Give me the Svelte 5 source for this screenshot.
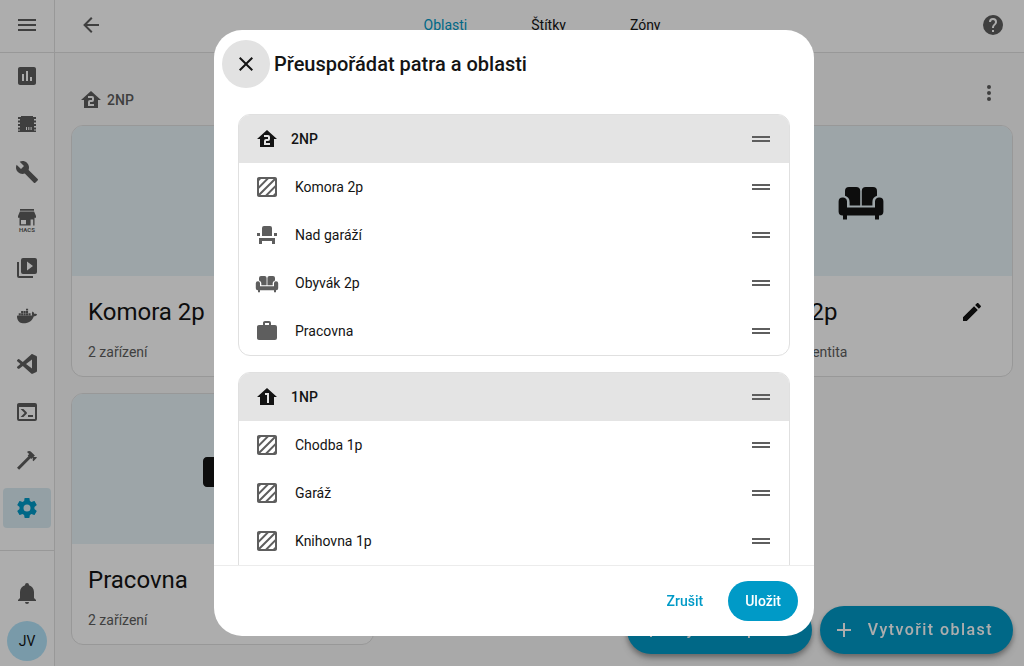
<script lang="ts">
	interface Room {
		name: string;
		icon: string;
	}

	interface Floor {
		name: string;
		icon: string;
		rooms: Room[];
	}

	const ICONS: Record<string, string> = {
		menu: 'M3,6H21V8H3V6M3,11H21V13H3V11M3,16H21V18H3V16Z',
		chart: 'M9 17H7V10H9V17M13 17H11V7H13V17M17 17H15V13H17V17M19 3H5C3.9 3 3 3.9 3 5V19C3 20.1 3.9 21 5 21H19C20.1 21 21 20.1 21 19V5C21 3.9 20.1 3 19 3Z',
		chip: 'M6 4H18V5H21V7H19V8.5H21V10.5H19V12H21V14H19V15.5H21V17.5H19V18.5H21V20H6V20H3V18.5H5V17.5H3V15.5H5V14H3V12H5V10.5H3V8.5H5V7H3V5H6V4M11 15V18H12V15H11M13.3 15V18H14.3V15H13.3M15.6 15V18H16.6V15H15.6Z',
		wrench: 'M22.7,19L13.6,9.9C14.5,7.6 14,4.9 12.1,3C10.1,1 7.1,0.6 4.7,1.7L9,6L6,9L1.6,4.7C0.4,7.1 0.9,10.1 2.9,12.1C4.8,14 7.5,14.5 9.8,13.6L18.9,22.7C19.3,23.1 19.9,23.1 20.3,22.7L22.6,20.4C23.1,20 23.1,19.3 22.7,19Z',
		hacs: 'M5 1H19V2.8H5V1M4.9 3.5H19.1L21 8V9.8H3V8L4.9 3.5M4.5 9.8H19.5V17.5H18.2V11.6H15.6V17.5H4.5V9.8M6 12V16.2H11V12H6Z',
		media: 'M4,6H2V20A2,2 0 0,0 4,22H18V20H4V6M20,2H8A2,2 0 0,0 6,4V16A2,2 0 0,0 8,18H20A2,2 0 0,0 22,16V4A2,2 0 0,0 20,2M12,14.5V5.5L18,10L12,14.5Z',
		docker: 'M21.81 10.25C21.75 10.21 21.25 9.82 20.17 9.82C19.89 9.82 19.61 9.85 19.33 9.9C19.12 8.5 17.95 7.79 17.9 7.76L17.61 7.59L17.43 7.86C17.19 8.22 17 8.63 16.92 9.05C16.72 9.85 16.84 10.61 17.25 11.26C16.76 11.54 15.96 11.61 15.79 11.61H2.62C2.28 11.61 2 11.89 2 12.24C2 13.39 2.18 14.54 2.58 15.62C3.03 16.81 3.71 17.69 4.58 18.23C5.56 18.83 7.17 19.17 9 19.17C9.79 19.17 10.61 19.1 11.42 18.95C12.54 18.75 13.62 18.36 14.61 17.79C15.43 17.32 16.16 16.72 16.78 16C17.82 14.83 18.43 13.5 18.89 12.35H19.07C20.23 12.35 20.94 11.89 21.33 11.5C21.59 11.26 21.78 10.97 21.92 10.63L22 10.39L21.81 10.25M3.7 9.3H5.8V11.2H3.7V9.3M6.1 9.3H8.2V11.2H6.1V9.3M8.6 9.3H10.7V11.2H8.6V9.3M11 9.3H13.1V11.2H11V9.3M13.5 9.3H15.6V11.2H13.5V9.3M6.1 7H8.2V8.9H6.1V7M8.6 7H10.7V8.9H8.6V7M11 7H13.1V8.9H11V7M11 4.7H13.1V6.6H11V4.7Z',
		vscode: 'M17 16.6V7.4L11 12L17 16.6M2.2 9.2C1.9 8.9 1.9 8.4 2.2 8.1L3.2 7.2C3.5 7 3.9 7 4.2 7.2L7.8 10L16.2 2.4C16.6 2.1 17.1 2 17.6 2.2L21.4 4.1C21.8 4.3 22 4.7 22 5.1V18.9C22 19.3 21.8 19.7 21.4 19.9L17.6 21.8C17.1 22 16.6 21.9 16.2 21.6L7.8 14L4.2 16.8C3.9 17 3.5 17 3.2 16.8L2.2 15.9C1.9 15.6 1.9 15.1 2.2 14.8L5.4 12L2.2 9.2Z',
		console: 'M20,19V7H4V19H20M20,3A2,2 0 0,1 22,5V19A2,2 0 0,1 20,21H4A2,2 0 0,1 2,19V5C2,3.89 2.9,3 4,3H20M13,17V15H18V17H13M9.58,13L5.57,9H8.4L11.7,12.3C12.09,12.69 12.09,13.33 11.7,13.72L8.42,17H5.59L9.58,13Z',
		hammer: 'M2,19.63L13.43,8.2L12.72,7.5L14.14,6.07L12,3.89C13.2,2.7 15.09,2.7 16.27,3.89L19.87,7.5L18.45,8.91H21.29L22,9.62L18.45,13.21L17.74,12.5V9.62L16.27,11.04L15.56,10.33L4.13,21.76L2,19.63Z',
		cog: 'M12,15.5A3.5,3.5 0 0,1 8.5,12A3.5,3.5 0 0,1 12,8.5A3.5,3.5 0 0,1 15.5,12A3.5,3.5 0 0,1 12,15.5M19.43,12.97C19.47,12.65 19.5,12.33 19.5,12C19.5,11.67 19.47,11.34 19.43,11L21.54,9.37C21.73,9.22 21.78,8.95 21.66,8.73L19.66,5.27C19.54,5.05 19.27,4.96 19.05,5.05L16.56,6.05C16.04,5.66 15.5,5.32 14.87,5.07L14.5,2.42C14.46,2.18 14.25,2 14,2H10C9.75,2 9.54,2.18 9.5,2.42L9.13,5.07C8.5,5.32 7.96,5.66 7.44,6.05L4.95,5.05C4.73,4.96 4.46,5.05 4.34,5.27L2.34,8.73C2.21,8.95 2.27,9.22 2.46,9.37L4.57,11C4.53,11.34 4.5,11.67 4.5,12C4.5,12.33 4.53,12.65 4.57,12.97L2.46,14.63C2.27,14.78 2.21,15.05 2.34,15.27L4.34,18.73C4.46,18.95 4.73,19.03 4.95,18.95L7.44,17.94C7.96,18.34 8.5,18.68 9.13,18.93L9.5,21.58C9.54,21.82 9.75,22 10,22H14C14.25,22 14.46,21.82 14.5,21.58L14.87,18.93C15.5,18.67 16.04,18.34 16.56,17.94L19.05,18.95C19.27,19.03 19.54,18.95 19.66,18.73L21.66,15.27C21.78,15.05 21.73,14.78 21.54,14.63L19.43,12.97Z',
		bell: 'M21,19V20H3V19L5,17V11C5,7.9 7.03,5.17 10,4.29C10,4.19 10,4.1 10,4A2,2 0 0,1 12,2A2,2 0 0,1 14,4C14,4.1 14,4.19 14,4.29C16.97,5.17 19,7.9 19,11V17L21,19M14,21A2,2 0 0,1 12,23A2,2 0 0,1 10,21Z',
		back: 'M20,11V13H8L13.5,18.5L12.08,19.92L4.16,12L12.08,4.08L13.5,5.5L8,11H20Z',
		help: 'M15.07,11.25L14.17,12.17C13.45,12.89 13,13.5 13,15H11V14.5C11,13.39 11.45,12.39 12.17,11.67L13.41,10.41C13.78,10.05 14,9.55 14,9C14,7.89 13.1,7 12,7A2,2 0 0,0 10,9H8A4,4 0 0,1 12,5A4,4 0 0,1 16,9C16,9.88 15.64,10.67 15.07,11.25M13,19H11V17H13M12,2A10,10 0 0,0 2,12A10,10 0 0,0 12,22A10,10 0 0,0 22,12C22,6.47 17.5,2 12,2Z',
		dots: 'M12,16A2,2 0 0,1 14,18A2,2 0 0,1 12,20A2,2 0 0,1 10,18A2,2 0 0,1 12,16M12,10A2,2 0 0,1 14,12A2,2 0 0,1 12,14A2,2 0 0,1 10,12A2,2 0 0,1 12,10M12,4A2,2 0 0,1 14,6A2,2 0 0,1 12,8A2,2 0 0,1 10,6A2,2 0 0,1 12,4Z',
		pencil: 'M20.71,7.04C21.1,6.65 21.1,6 20.71,5.63L18.37,3.29C18,2.9 17.35,2.9 16.96,3.29L15.12,5.12L18.87,8.87M3,17.25V21H6.75L17.81,9.93L14.06,6.18L3,17.25Z',
		plus: 'M19,13H13V19H11V13H5V11H11V5H13V11H19V13Z',
		close: 'M19,6.41L17.59,5L12,10.59L6.41,5L5,6.41L10.59,12L5,17.59L6.41,19L12,13.41L17.59,19L19,17.59L13.41,12L19,6.41Z',
		drag: 'M21 11H3V9H21V11M21 15H3V13H21V15Z',
		floor1: 'M12,3L2,12H5V20H19V12H22L12,3M10,8H14V18H12V10H10V8Z',
		floor2: 'M12,3L2,12H5V20H19V12H22L12,3M9,8H13A2,2 0 0,1 15,10V12A2,2 0 0,1 13,14H11V16H15V18H9V14A2,2 0 0,1 11,12H13V10H9V8Z',
		texture: 'M20 2H4C2.9 2 2 2.9 2 4V20C2 21.11 2.9 22 4 22H20C21.11 22 22 21.11 22 20V4C22 2.9 21.11 2 20 2M4 6L6 4H10.9L4 10.9V6M4 13.7L13.7 4H18.6L4 18.6V13.7M20 18L18 20H13.1L20 13.1V18M20 10.3L10.3 20H5.4L20 5.4V10.3Z',
		seat: 'M4,18V21H7V18H17V21H20V15H4V18M19,10H22V13H19V10M2,10H5V13H2V10M17,13H7V5A2,2 0 0,1 9,3H15A2,2 0 0,1 17,5V13Z',
		sofa: 'M6 5H9.6A2 2 0 0 1 11.6 7V14.2H6.3V12.6C6.3 10.9 5.5 9.9 4 9.4V7A2 2 0 0 1 6 5M14.4 5H18A2 2 0 0 1 20 7V9.4C18.5 9.9 17.7 10.9 17.7 12.6V14.2H12.4V7A2 2 0 0 1 14.4 5M2.8 10.3A2 2 0 0 1 5 12.3V15.2H19V12.3A2 2 0 0 1 21.2 10.3A2 2 0 0 1 23.2 12.3V17.2A2 2 0 0 1 21.2 19.2H21V21.2H19V19.2H5V21.2H3V19.2H2.8A2 2 0 0 1 .8 17.2V12.3A2 2 0 0 1 2.8 10.3Z',
		briefcase: 'M10,2H14A2,2 0 0,1 16,4V6H20A2,2 0 0,1 22,8V19A2,2 0 0,1 20,21H4C2.89,21 2,20.1 2,19V8C2,6.89 2.89,6 4,6H8V4C8,2.89 8.89,2 10,2M14,6V4H10V6H14Z'
	};

	const nav = [
		{ icon: 'chart', label: 'Energie' },
		{ icon: 'chip', label: 'ESPHome' },
		{ icon: 'wrench', label: 'Nástroje' },
		{ icon: 'hacs', label: 'HACS' },
		{ icon: 'media', label: 'Média' },
		{ icon: 'docker', label: 'Docker' },
		{ icon: 'vscode', label: 'Studio Code Server' },
		{ icon: 'console', label: 'Terminál' },
		{ icon: 'hammer', label: 'Nástroje pro vývojáře' },
		{ icon: 'cog', label: 'Nastavení' }
	];

	const tabs = ['Oblasti', 'Štítky', 'Zóny'];

	const cards = [
		{ name: 'Komora 2p', icon: '', info: '2 zařízení' },
		{ name: 'Nad garáží', icon: 'seat', info: '2 zařízení' },
		{ name: 'Obyvák 2p', icon: 'sofa', info: '2 zařízení a 1 entita' },
		{ name: 'Pracovna', icon: 'briefcase', info: '2 zařízení' }
	];

	const floors: Floor[] = [
		{
			name: '2NP',
			icon: 'floor2',
			rooms: [
				{ name: 'Komora 2p', icon: 'texture' },
				{ name: 'Nad garáží', icon: 'seat' },
				{ name: 'Obyvák 2p', icon: 'sofa' },
				{ name: 'Pracovna', icon: 'briefcase' }
			]
		},
		{
			name: '1NP',
			icon: 'floor1',
			rooms: [
				{ name: 'Chodba 1p', icon: 'texture' },
				{ name: 'Garáž', icon: 'texture' },
				{ name: 'Knihovna 1p', icon: 'texture' }
			]
		}
	];

	let activeTab = $state('Oblasti');
	let open = $state(true);

	function close() {
		open = false;
	}
</script>

{#snippet icon(name: string)}
	<svg class="icon" viewBox="0 0 24 24" aria-hidden="true">
		<path d={ICONS[name]} fill-rule="evenodd" />
		{#if name === 'hacs'}
			<text x="12" y="23.5" text-anchor="middle">HACS</text>
		{/if}
	</svg>
{/snippet}

<div class="app">
	<aside class="sidebar">
		<div class="sidebar-top">
			<button class="icon-btn" aria-label="Menu">{@render icon('menu')}</button>
		</div>
		<nav>
			{#each nav as item}
				<a href="#{item.icon}" class="nav-item" class:selected={item.icon === 'cog'} aria-label={item.label}>
					{@render icon(item.icon)}
				</a>
			{/each}
		</nav>
		<div class="sidebar-bottom">
			<button class="nav-item" aria-label="Oznámení">{@render icon('bell')}</button>
			<a href="#profile" class="avatar">JV</a>
		</div>
	</aside>

	<div class="page">
		<header class="toolbar">
			<button class="icon-btn" aria-label="Zpět">{@render icon('back')}</button>
			<div class="tabs" role="tablist">
				{#each tabs as tab}
					<button
						role="tab"
						class="tab"
						class:active={tab === activeTab}
						aria-selected={tab === activeTab}
						onclick={() => (activeTab = tab)}>{tab}</button
					>
				{/each}
			</div>
			<button class="icon-btn" aria-label="Nápověda">{@render icon('help')}</button>
		</header>

		<main>
			<div class="floor-header">
				<h2>{@render icon('floor2')}2NP</h2>
				<button class="icon-btn" aria-label="Více">{@render icon('dots')}</button>
			</div>
			<div class="cards">
				{#each cards as card}
					<article class="card">
						<div class="picture">
							{#if card.icon}
								{@render icon(card.icon)}
							{/if}
						</div>
						<div class="card-title">
							<h3>{card.name}</h3>
							<button class="icon-btn" aria-label="Upravit">{@render icon('pencil')}</button>
						</div>
						<p>{card.info}</p>
					</article>
				{/each}
			</div>
		</main>

		<div class="fabs">
			<button class="fab">{@render icon('plus')}Vytvořit patro</button>
			<button class="fab">{@render icon('plus')}Vytvořit oblast</button>
		</div>
	</div>
</div>

{#if open}
	<div class="scrim">
		<div class="dialog" role="dialog" aria-modal="true" aria-labelledby="dialog-title">
			<div class="dialog-header">
				<button class="icon-btn close" aria-label="Zavřít" onclick={close}>{@render icon('close')}</button>
				<h1 id="dialog-title">Přeuspořádat patra a oblasti</h1>
			</div>
			<div class="dialog-content">
				{#each floors as floor}
					<section class="floor">
						<div class="row floor-row">
							{@render icon(floor.icon)}
							<span>{floor.name}</span>
							<button class="handle" aria-label="Přesunout {floor.name}">{@render icon('drag')}</button>
						</div>
						<ul>
							{#each floor.rooms as room}
								<li class="row">
									{@render icon(room.icon)}
									<span>{room.name}</span>
									<button class="handle" aria-label="Přesunout {room.name}">{@render icon('drag')}</button>
								</li>
							{/each}
						</ul>
					</section>
				{/each}
			</div>
			<div class="dialog-actions">
				<button class="btn" onclick={close}>Zrušit</button>
				<button class="btn primary" onclick={close}>Uložit</button>
			</div>
		</div>
	</div>
{/if}

<style>
	:global(body) {
		background: #fafafa;
		overflow: hidden;
	}

	.app,
	.scrim {
		--primary: #009ac7;
		--text: #141414;
		--secondary: #5e5e5e;
		--divider: #e0e0e0;

		font-family: Roboto, sans-serif;
		font-size: 14px;
		line-height: 20px;
		color: var(--text);
	}

	.app {
		display: flex;
		height: 100vh;
		overflow: hidden;
	}

	button {
		border: 0;
		padding: 0;
		background: none;
		font: inherit;
		color: inherit;
		cursor: pointer;
	}

	a {
		color: inherit;
		text-decoration: none;
	}

	h1,
	h2,
	h3,
	p,
	ul {
		margin: 0;
		padding: 0;
	}

	.icon {
		display: block;
		flex: none;
		width: 24px;
		height: 24px;
		fill: currentColor;
	}

	.icon text {
		font-size: 6px;
		font-weight: 700;
	}

	.icon-btn {
		display: grid;
		place-items: center;
		flex: none;
		width: 48px;
		height: 48px;
		border-radius: 50%;
	}

	/* --- Sidebar --- */

	.sidebar {
		display: flex;
		flex-direction: column;
		flex: none;
		width: 54px;
		border-right: 1px solid var(--divider);
		background: #fff;
		color: var(--secondary);
	}

	.sidebar-top {
		display: flex;
		justify-content: center;
		align-items: center;
		height: 50px;
		padding-bottom: 2px;
		border-bottom: 1px solid var(--divider);
	}

	nav {
		display: flex;
		flex-direction: column;
		align-items: center;
		gap: 8px;
		padding-top: 3px;
	}

	.nav-item {
		display: grid;
		place-items: center;
		width: 48px;
		height: 40px;
		border-radius: 4px;
	}

	.nav-item.selected {
		background: #dbecf4;
		color: var(--primary);
	}

	.sidebar-bottom {
		display: flex;
		flex-direction: column;
		align-items: center;
		gap: 8px;
		margin-top: auto;
		padding: 22px 0 5px;
		border-top: 1px solid var(--divider);
	}

	.avatar {
		display: grid;
		place-items: center;
		width: 40px;
		height: 40px;
		border-radius: 50%;
		background: #b3e4fa;
		color: var(--text);
	}

	/* --- Page --- */

	.page {
		flex: 1;
		min-width: 0;
	}

	.toolbar {
		display: flex;
		align-items: center;
		height: 50px;
		padding: 0 7px 2px 12px;
		border-bottom: 1px solid var(--divider);
		background: #fff;
		color: var(--secondary);
	}

	.tabs {
		display: flex;
		flex: 1;
		justify-content: center;
	}

	.tab {
		height: 48px;
		padding: 0 32px;
		color: var(--text);
	}

	.tab.active {
		color: var(--primary);
	}

	main {
		padding: 16px 11px 16px 16px;
	}

	.floor-header {
		display: flex;
		justify-content: space-between;
		margin-bottom: 8px;
		color: var(--secondary);
	}

	h2 {
		display: flex;
		align-items: center;
		gap: 4px;
		padding: 14px 8px 0;
		font-size: 14px;
		font-weight: 500;
	}

	.cards {
		display: grid;
		grid-template-columns: repeat(3, 1fr);
		gap: 16px;
	}

	.card {
		overflow: hidden;
		border: 1px solid var(--divider);
		border-radius: 12px;
		background: #fff;
	}

	.picture {
		display: grid;
		place-items: center;
		height: 150px;
		background: #e7f3f8;
	}

	.picture .icon {
		width: 48px;
		height: 48px;
	}

	.card-title {
		display: flex;
		align-items: center;
		justify-content: space-between;
		padding: 12px 16px 4px;
	}

	h3 {
		font-size: 24px;
		font-weight: 400;
		line-height: 32px;
	}

	.card p {
		padding: 2px 16px 14px;
		color: var(--secondary);
	}

	.fabs {
		position: fixed;
		right: 11px;
		bottom: 12px;
		display: flex;
		gap: 8px;
	}

	.fab {
		display: flex;
		align-items: center;
		gap: 12px;
		height: 48px;
		padding: 0 20px 0 12px;
		border-radius: 24px;
		background: var(--primary);
		box-shadow: 0 3px 5px rgba(0, 0, 0, 0.3), 0 6px 10px rgba(0, 0, 0, 0.14);
		color: #fff;
		font-size: 16px;
		font-weight: 500;
		letter-spacing: 0.09em;
	}

	/* --- Dialog --- */

	.scrim {
		position: fixed;
		inset: 0;
		display: flex;
		justify-content: center;
		padding: 30px 16px 30px 20px;
		background: rgba(0, 0, 0, 0.32);
	}

	.dialog {
		display: flex;
		flex-direction: column;
		width: 100%;
		max-width: 600px;
		overflow: hidden;
		border-radius: 28px;
		background: #fff;
	}

	.dialog-header {
		display: flex;
		align-items: center;
		gap: 4px;
		padding: 10px 8px;
	}

	.close {
		background: #e2e2e2;
	}

	h1 {
		font-size: 20px;
		font-weight: 500;
		line-height: 28px;
	}

	.dialog-content {
		display: flex;
		flex: 1;
		flex-direction: column;
		gap: 16px;
		min-height: 0;
		padding: 16px 24px 0;
		overflow-y: auto;
		scrollbar-width: none;
	}

	.floor {
		flex: none;
		overflow: hidden;
		border: 1px solid var(--divider);
		border-radius: 12px;
	}

	.floor:last-child {
		padding-bottom: 48px;
	}

	.row {
		display: flex;
		align-items: center;
		gap: 16px;
		height: 48px;
		padding: 0 16px;
		color: var(--secondary);
	}

	.row span {
		flex: 1;
		color: var(--text);
	}

	.floor-row {
		gap: 12px;
		background: #e4e4e4;
		color: var(--text);
		font-weight: 500;
	}

	.handle {
		color: var(--secondary);
		cursor: grab;
	}

	.dialog-actions {
		display: flex;
		justify-content: flex-end;
		gap: 8px;
		padding: 15px 16px;
		border-top: 1px solid #ececec;
	}

	.btn {
		height: 40px;
		padding: 0 17px;
		border-radius: 20px;
		color: var(--primary);
		font-weight: 500;
	}

	.btn.primary {
		background: var(--primary);
		color: #fff;
	}
</style>
